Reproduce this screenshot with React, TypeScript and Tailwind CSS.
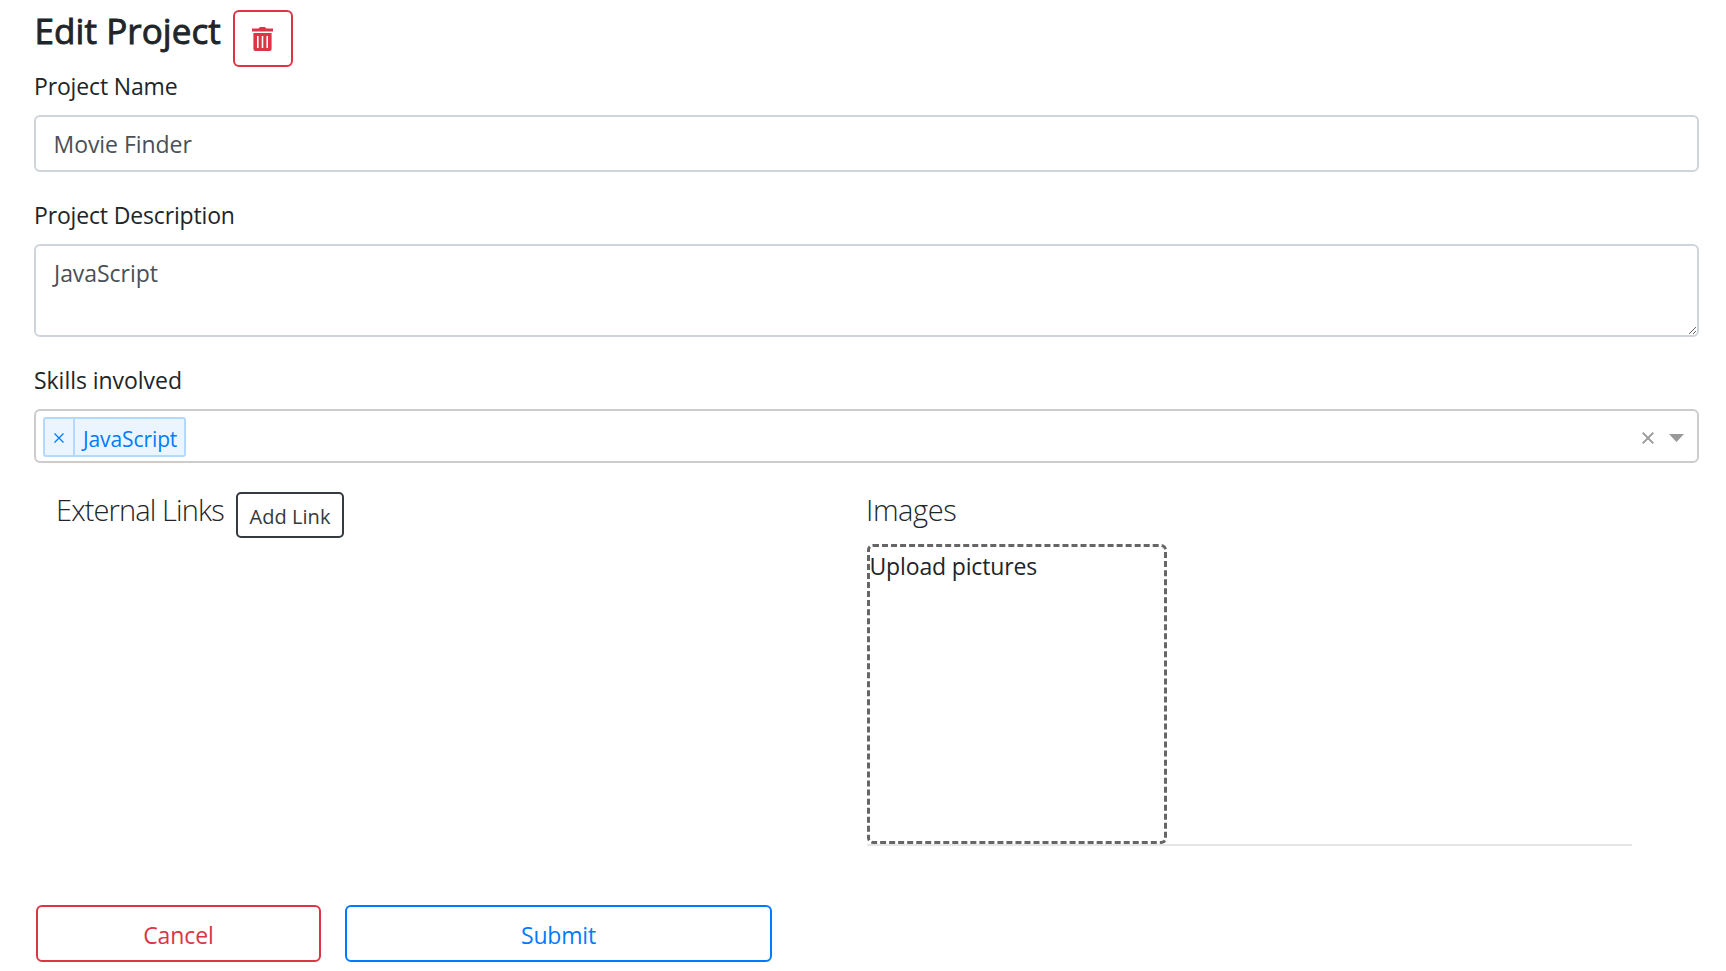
import React from "react";

function TrashIcon() {
  return (
    <svg width="21" height="24" viewBox="0 0 21 24" className="mr-px block" fill="#dc3545">
      <path
        fillRule="evenodd"
        d="M0 1.6h6.6L7.4.5Q7.8 0 8.4 0h4.2q.6 0 1 .5l.8 1.1H21v2.9H0zM1.4 6h18.2v16q0 2-2 2H3.4q-2 0-2-2zM5 9v12h1.6V9zm4.7 0v12h1.6V9zm4.7 0v12H16V9z"
      />
    </svg>
  );
}

export default function App() {
  return (
    <main className="h-[971px] w-full overflow-hidden bg-white pr-[27px] pl-[34px] font-['Open_Sans','Noto_Sans',sans-serif] text-[23px] leading-9 text-[#212529]">
      <header className="flex h-[67px] items-start">
        <h1 className="w-[199px] pt-[9px] pl-[0.5px] text-[35px] leading-[43px] font-medium tracking-[0.08px] whitespace-nowrap [-webkit-text-stroke:0.9px_#212529]">
          Edit Project
        </h1>
        <button
          aria-label="Delete project"
          className="mt-[10px] flex h-[57px] w-[60px] items-center justify-center rounded-[6px] border-2 border-[#dc3545]"
        >
          <TrashIcon />
        </button>
      </header>

      <div className="h-[129px]">
        <label className="block h-12 pt-px tracking-[-0.15px]">Project Name</label>
        <input
          defaultValue="Movie Finder"
          className="block h-[57px] w-full rounded-[6px] border-2 border-[#ced4da] px-[17.5px] pt-px tracking-[-0.05px] text-[#495057] outline-none"
        />
      </div>

      <div className="h-[165px]">
        <label className="block h-12 pt-px tracking-[-0.16px]">Project Description</label>
        <textarea
          defaultValue="JavaScript"
          className="block h-[93px] min-h-[93px] w-full resize-y rounded-[6px] border-2 border-[#ced4da] px-[18px] py-[9px] tracking-[-0.05px] text-[#495057] outline-none"
        />
      </div>

      <div className="h-[102px]">
        <label className="block h-12 pt-px tracking-[-0.04px]">Skills involved</label>
        <div className="flex h-[54px] items-start rounded-[6px] border-2 border-[#cccccc] pr-[13px] pl-[7px]">
          <div className="mt-[6px] flex h-10 w-[143px] rounded-[3px] border-2 border-[#b3d9ff] bg-[#ebf5ff] text-[#007bff]">
            <span className="flex w-[30px] items-center justify-center border-r-2 border-[#b3d9ff] pt-[2px]">
              <svg width="10" height="10" viewBox="0 0 10 10" stroke="currentColor" strokeWidth="1.3">
                <path d="M.5.5l9 9M9.5.5l-9 9" />
              </svg>
            </span>
            <span className="pt-[2px] pl-2 text-[21px] leading-9 tracking-[-0.1px]">JavaScript</span>
          </div>
          <div className="ml-auto flex h-[50px] items-center gap-[15px] pt-1 text-[#999]">
            <svg width="12" height="12" viewBox="0 0 12 12" stroke="currentColor" strokeWidth="1.9">
              <path d="M.7.7l10.6 10.6M11.3.7L.7 11.3" />
            </svg>
            <svg width="15" height="8" viewBox="0 0 15 8" fill="currentColor" className="mb-px">
              <path d="M0 0h15L7.5 8z" />
            </svg>
          </div>
        </div>
      </div>

      <div className="flex h-[442px]">
        <section className="flex w-[833px] items-start pl-[22px]">
          <h2 className="w-[180px] pt-[29px] text-[29px] leading-9 font-light tracking-[-0.87px] whitespace-nowrap">
            External Links
          </h2>
          <button className="mt-[29px] h-[46px] w-[108px] rounded-[5px] border-2 border-[#343a40] pt-[3px] text-[20px] leading-none tracking-[0.05px] text-[#343a40]">
            Add Link
          </button>
        </section>
        <section className="w-[765px] pt-[29px]">
          <h2 className="-ml-px h-[52px] text-[29px] leading-9 font-light tracking-[-0.4px]">Images</h2>
          <div className="h-[300px] w-[300px] rounded-[6px] border-3 border-dashed border-[#666] pt-px tracking-[-0.15px]">
            <span className="-ml-[0.5px]">Upload pictures</span>
          </div>
          <hr className="h-0 border-t-2 border-[#e6e6e6]" />
        </section>
      </div>

      <footer className="flex gap-6 pl-[2px]">
        <button className="h-[57px] w-[285px] rounded-[6px] border-2 border-[#dc3545] pt-[3px] tracking-[-0.1px] text-[#dc3545]">
          Cancel
        </button>
        <button className="h-[57px] w-[427px] rounded-[6px] border-2 border-[#007bff] pt-[3px] tracking-[-0.2px] text-[#007bff]">
          Submit
        </button>
      </footer>
    </main>
  );
}
